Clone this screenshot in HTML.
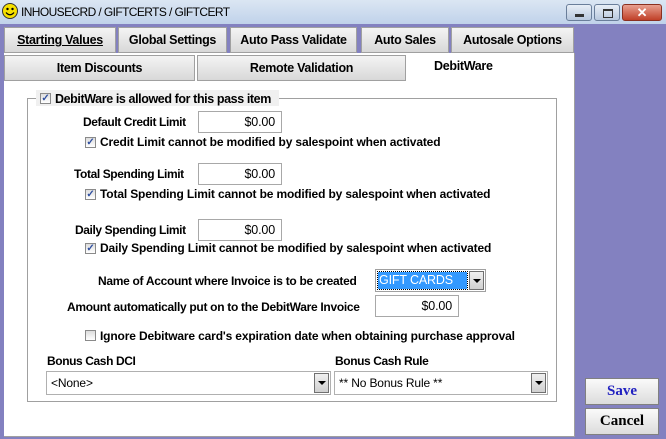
<!DOCTYPE html><html><head><style>
body{margin:0;width:666px;height:439px;background:#8381c0;position:relative;overflow:hidden;font-family:"Liberation Sans",Arial,sans-serif;font-size:12px;font-weight:bold;color:#000;letter-spacing:-0.15px}
.a{position:absolute;white-space:nowrap}
.tab{position:absolute;background:linear-gradient(#f4f4f4,#d8d8d8);border:1px solid #a0a0a0;box-sizing:border-box;text-align:center;line-height:24px;font-size:12.5px;letter-spacing:-0.3px}
.inp{position:absolute;background:#fff;border:1px solid #a8a8a8;box-sizing:border-box;text-align:right;padding-right:6px;font-weight:normal;font-size:12.5px;line-height:20px}
.cb{position:absolute;width:11px;height:11px;border:1px solid #8a8a8a;background:linear-gradient(#ddd,#fff);box-sizing:border-box;font-size:10px;line-height:9px;text-align:center;color:#3050a0}
.sel{position:absolute;background:#fff;border:1px solid #b0b0b0;box-sizing:border-box;font-weight:normal;font-size:12px;line-height:22px;padding-left:4px}
.arr{position:absolute;right:1px;top:1px;bottom:1px;width:15px;background:linear-gradient(#f0f0f0,#d0d0d0);border:1px solid #707070;box-sizing:border-box}
.arr:after{content:"";position:absolute;left:3px;top:7px;border:4px solid transparent;border-top:4px solid #000}
.btn{position:absolute;left:585px;width:74px;height:27px;border:1px solid #808080;box-sizing:border-box;background:linear-gradient(#fafafa,#dcdcdc);font-family:"Liberation Serif",serif;font-size:15px;text-align:center;line-height:25px;letter-spacing:0}
</style></head><body>
<div class="a" style="left:0;top:0;width:666px;height:24px;background:linear-gradient(#dbe6f3,#c0d2ea)"></div>
<svg class="a" style="left:2px;top:3px" width="16" height="16"><circle cx="8" cy="8" r="7.5" fill="#f5e000" stroke="#333"/><circle cx="5.5" cy="6" r="1.2" fill="#000"/><circle cx="10.5" cy="6" r="1.2" fill="#000"/><path d="M4 9.5 Q8 14 12 9.5" stroke="#000" fill="none" stroke-width="1.3"/></svg>
<div class="a" style="left:21px;top:5px;font-weight:normal;font-size:12px;letter-spacing:-0.6px">INHOUSECRD / GIFTCERTS / GIFTCERT</div>
<div class="a" style="left:566px;top:4px;width:26px;height:17px;border:1px solid #6a7e9a;border-radius:3px;background:linear-gradient(#e8eef6,#b8c8de);box-sizing:border-box"><div class="a" style="left:8px;top:9px;width:9px;height:3px;background:#333"></div></div>
<div class="a" style="left:594px;top:4px;width:26px;height:17px;border:1px solid #6a7e9a;border-radius:3px;background:linear-gradient(#e8eef6,#b8c8de);box-sizing:border-box"><div class="a" style="left:8px;top:4px;width:8px;height:6px;border:1px solid #333;border-top-width:2px"></div></div>
<div class="a" style="left:622px;top:4px;width:40px;height:17px;border:1px solid #8a3020;border-radius:3px;background:linear-gradient(#e8a090,#c04028);box-sizing:border-box;color:#fff;text-align:center;font-size:13px;line-height:15px">✕</div>

<div class="tab" style="left:4px;top:27px;width:112px;height:26px"><u>Starting Values</u></div>
<div class="tab" style="left:118px;top:27px;width:109px;height:26px">Global Settings</div>
<div class="tab" style="left:230px;top:27px;width:127px;height:26px">Auto Pass Validate</div>
<div class="tab" style="left:361px;top:27px;width:88px;height:26px">Auto Sales</div>
<div class="tab" style="left:451px;top:27px;width:123px;height:26px">Autosale Options</div>
<div class="a" style="left:4px;top:53px;width:570px;height:383px;background:#fff;border-right:1px solid #a0a0a0;border-bottom:1px solid #a0a0a0"></div>
<div class="a" style="left:0;top:80px;width:4px;height:359px;background:#8381c0"></div>
<div class="tab" style="left:4px;top:55px;width:191px;height:26px">Item Discounts</div>
<div class="tab" style="left:197px;top:55px;width:209px;height:26px">Remote Validation</div>
<div class="a" style="left:434px;top:59px;font-size:12.5px;letter-spacing:-0.3px">DebitWare</div>

<div class="a" style="left:27px;top:98px;width:528px;height:302px;border:1px solid #a0a0a0"></div>
<div class="a" style="left:36px;top:90px;width:243px;height:16px;background:#f0f0f0"></div>
<div class="cb" style="left:40px;top:93px">✓</div>
<div class="a" style="left:55px;top:92px;font-size:12.5px;letter-spacing:-0.4px">DebitWare is allowed for this pass item</div>

<div class="a" style="left:83px;top:115px;letter-spacing:-0.4px">Default Credit Limit</div>
<div class="inp" style="left:198px;top:111px;width:84px;height:22px">$0.00</div>
<div class="cb" style="left:85px;top:137px">✓</div>
<div class="a" style="left:100px;top:135px">Credit Limit cannot be modified by salespoint when activated</div>

<div class="a" style="left:74px;top:167px;letter-spacing:-0.4px">Total Spending Limit</div>
<div class="inp" style="left:198px;top:163px;width:84px;height:22px">$0.00</div>
<div class="cb" style="left:85px;top:189px">✓</div>
<div class="a" style="left:100px;top:187px">Total Spending Limit cannot be modified by salespoint when activated</div>

<div class="a" style="left:75px;top:223px;letter-spacing:-0.4px">Daily Spending Limit</div>
<div class="inp" style="left:198px;top:219px;width:84px;height:22px">$0.00</div>
<div class="cb" style="left:85px;top:243px">✓</div>
<div class="a" style="left:100px;top:241px">Daily Spending Limit cannot be modified by salespoint when activated</div>

<div class="a" style="left:98px;top:274px;letter-spacing:-0.3px">Name of Account where Invoice is to be created</div>
<div class="a" style="left:375px;top:269px;width:111px;height:23px;border:1px solid #a0a0a0;box-sizing:border-box;background:#fff"></div>
<div class="a" style="left:378px;top:272px;width:88px;height:17px;background:#3399ff;color:#fff;font-weight:normal;font-size:12.5px;line-height:17px;padding-left:1px;outline:1px dotted #000">GIFT CARDS</div>
<div class="a" style="left:468px;top:271px;width:16px;height:19px"><div class="arr" style="right:0;top:0;bottom:0"></div></div>
<div class="a" style="left:67px;top:300px;letter-spacing:-0.3px">Amount automatically put on to the DebitWare Invoice</div>
<div class="inp" style="left:375px;top:295px;width:84px;height:22px">$0.00</div>

<div class="cb" style="left:85px;top:330px"></div>
<div class="a" style="left:100px;top:329px">Ignore Debitware card's expiration date when obtaining purchase approval</div>

<div class="a" style="left:47px;top:354px;letter-spacing:-0.4px">Bonus Cash DCI</div>
<div class="a" style="left:335px;top:354px;letter-spacing:-0.4px">Bonus Cash Rule</div>
<div class="sel" style="left:46px;top:371px;width:285px;height:24px">&lt;None&gt;<div class="arr"></div></div>
<div class="sel" style="left:334px;top:371px;width:214px;height:24px">** No Bonus Rule **<div class="arr"></div></div>

<div class="btn" style="top:378px;color:#2020c0">Save</div>
<div class="btn" style="top:408px">Cancel</div>
</body></html>
